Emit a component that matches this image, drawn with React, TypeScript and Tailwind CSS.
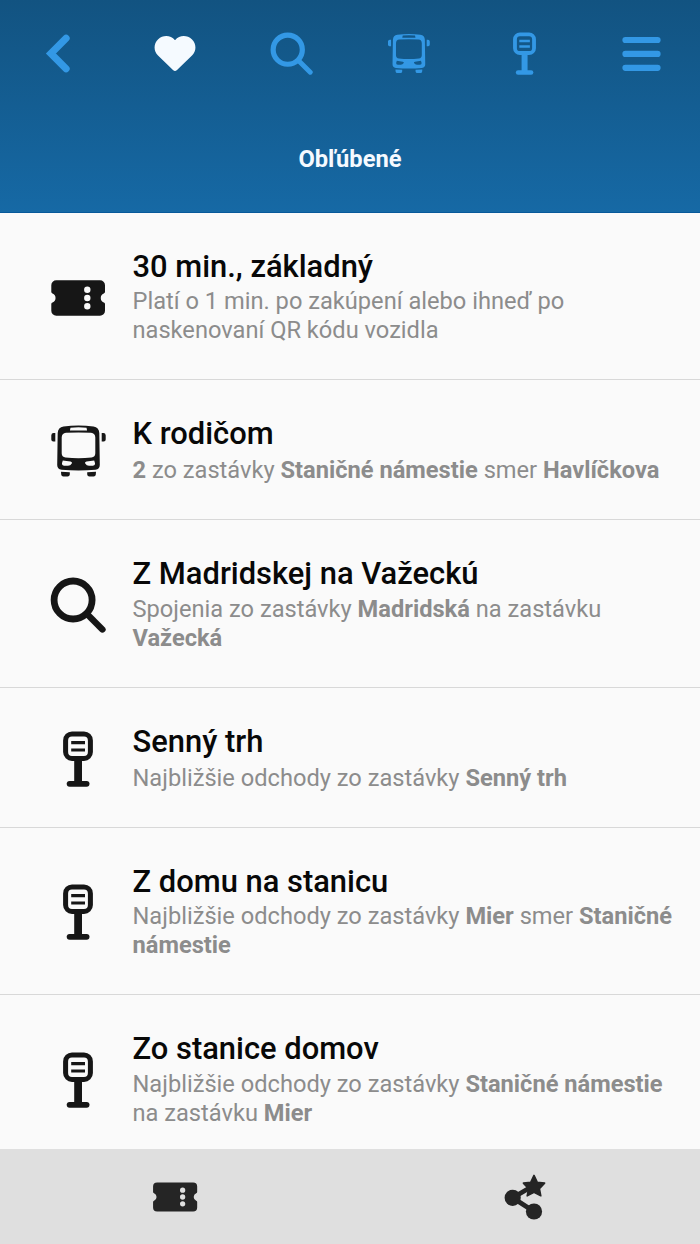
import React from 'react';

interface IconProps {
  className?: string;
}

const TicketIcon: React.FC<IconProps> = ({ className }) => (
  <svg viewBox="0 0 56 56" className={className} fill="currentColor" fillRule="evenodd">
    <path d="M6.3 10.2H50a5 5 0 0 1 5 5v6.8q0 1-1.2 1.4a5 5 0 0 0 0 9.2q1.2 .4 1.2 1.4v6.8a5 5 0 0 1-5 5H6.3a5 5 0 0 1-5-5v-6.8q0-1 1.2-1.4a5 5 0 0 0 0-9.2q-1.2-.4-1.2-1.4v-6.8a5 5 0 0 1 5-5ZM37.3 16.5a3.2 3.2 0 1 0 0 6.4a3.2 3.2 0 1 0 0-6.4ZM37.3 24.8a3.2 3.2 0 1 0 0 6.4a3.2 3.2 0 1 0 0-6.4ZM37.3 33.1a3.2 3.2 0 1 0 0 6.4a3.2 3.2 0 1 0 0-6.4Z" />
  </svg>
);

const BusIcon: React.FC<IconProps> = ({ className }) => (
  <svg viewBox="0 0 56 56" className={className} fill="currentColor" fillRule="evenodd">
    <path d="M13.5 3.6Q28.5 1.4 43.5 3.6Q49 4.6 49.3 10L49.8 42Q49.8 46.2 45.5 46.8Q28.5 48.4 11.5 46.8Q7.2 46.2 7.2 42L7.7 10Q8 4.6 13.5 3.6ZM20.5 4.7L19.9 7.6H37.1L36.5 4.7Q28.5 4 20.5 4.7ZM16 9.8Q11.8 10.2 11.7 14.5V30.3Q11.8 34 15.5 34.5Q28.5 36 41.5 34.5Q45.2 34 45.3 30.3V14.5Q45.2 10.2 41 9.8Q28.5 9 16 9.8ZM12.8 37.6L20.5 38.6Q22.6 39 21.8 40.5Q20.4 42.7 18 42.7H14Q11.8 42.6 11.9 40.5ZM44.2 37.6L36.5 38.6Q34.4 39 35.2 40.5Q36.6 42.7 39 42.7H43Q45.2 42.6 45.1 40.5Z" />
    <path d="M11 48.7L19.8 49.3V51.5Q19.6 53.5 17.6 53.5H13.4Q11.4 53.5 11.2 51.5ZM46 48.7L37.2 49.3V51.5Q37.4 53.5 39.4 53.5H43.6Q45.6 53.5 45.8 51.5Z" />
    <path d="M5.3 10.1V18.6H3.3Q1.3 18.4 1.3 16.4V12.3Q1.5 10.2 3.5 10.1ZM51.7 10.1V18.6H53.7Q55.7 18.4 55.7 16.4V12.3Q55.5 10.2 53.5 10.1Z" />
  </svg>
);

const SearchIcon: React.FC<IconProps> = ({ className }) => (
  <svg viewBox="0 0 56 56" className={className} fill="none" stroke="currentColor" strokeLinecap="round">
    <circle cx="23.1" cy="23" r="19" strokeWidth="6.8" />
    <path d="M38 38L52.4 52.4" strokeWidth="6.4" />
  </svg>
);

const StopIcon: React.FC<IconProps> = ({ className }) => (
  <svg viewBox="0 0 56 56" className={className} fill="none" stroke="currentColor">
    <rect x="15.6" y="3" width="24.8" height="24.4" rx="6.4" strokeWidth="5" />
    <path d="M21.2 11.6H35M21.2 19H35" strokeWidth="3.2" />
    <path d="M28.1 28V52" strokeWidth="7.8" />
    <path d="M19.6 52.8H36.6" strokeWidth="5.8" strokeLinecap="round" />
  </svg>
);

const BackIcon: React.FC<IconProps> = ({ className }) => (
  <svg viewBox="0 0 42 42" className={className} fill="none" stroke="currentColor" strokeWidth="7">
    <path d="M28.4 6.1L13.6 21L28.4 35.9" strokeLinecap="round" />
  </svg>
);

const HeartIcon: React.FC<IconProps> = ({ className }) => (
  <svg viewBox="0 0 42 42" className={className} fill="currentColor">
    <path d="M21 7.2C25.6 1.7 33.2 2 37.8 6.2C42.6 10.7 42.6 18 38 22.6L23 37.1Q21 38.9 19 37.1L4 22.6C-.6 18-.6 10.7 4.2 6.2C8.8 2 16.4 1.7 21 7.2Z" />
  </svg>
);

const MenuIcon: React.FC<IconProps> = ({ className }) => (
  <svg viewBox="0 0 42 42" className={className} fill="none" stroke="currentColor" strokeWidth="6" strokeLinecap="round">
    <path d="M5.3 7.8H36.7M5.3 21.4H36.7M5.3 35H36.7" />
  </svg>
);

const ShareIcon: React.FC<IconProps> = ({ className }) => (
  <svg viewBox="0 0 46 46" className={className} fill="currentColor">
    <path d="M32 37.5L10.7 23.8L30 12.5" fill="none" stroke="currentColor" strokeWidth="4.8" />
    <circle cx="10.7" cy="23.8" r="8.1" />
    <circle cx="32" cy="37.5" r="8.1" />
    <path
      d="M32 1.4L35.3 8.4L42.6 9.1L37.4 14.6L38.8 21.8L32 18.4L25.2 21.8L26.6 14.6L21.4 9.1L28.7 8.4Z"
      stroke="currentColor"
      strokeWidth="1.6"
      strokeLinejoin="round"
    />
  </svg>
);

interface Favourite {
  icon: React.FC<IconProps>;
  title: string;
  description: React.ReactNode;
  rowClass: string;
  textClass: string;
}

const tall = 'h-[167.5px]';
const short = 'h-[140px]';

const favourites: Favourite[] = [
  {
    icon: TicketIcon,
    title: '30 min., základný',
    description: 'Platí o 1 min. po zakúpení alebo ihneď po naskenovaní QR kódu vozidla',
    rowClass: 'h-[167px]',
    textClass: 'mt-[1px]',
  },
  {
    icon: BusIcon,
    title: 'K rodičom',
    description: <><b>2</b> zo zastávky <b>Staničné námestie</b> smer <b>Havlíčkova</b></>,
    rowClass: short,
    textClass: 'mt-[3px]',
  },
  {
    icon: SearchIcon,
    title: 'Z Madridskej na Važeckú',
    description: <>Spojenia zo zastávky <b>Madridská</b> na zastávku <b>Važecká</b></>,
    rowClass: tall,
    textClass: 'mt-[1.5px]',
  },
  {
    icon: StopIcon,
    title: 'Senný trh',
    description: <>Najbližšie odchody zo zastávky <b>Senný trh</b></>,
    rowClass: short,
    textClass: 'mt-[3px]',
  },
  {
    icon: StopIcon,
    title: 'Z domu na stanicu',
    description: <>Najbližšie odchody zo zastávky <b>Mier</b> smer <b>Staničné námestie</b></>,
    rowClass: tall,
    textClass: 'mt-[1px]',
  },
  {
    icon: StopIcon,
    title: 'Zo stanice domov',
    description: <>Najbližšie odchody zo zastávky <b>Staničné námestie</b> na zastávku <b>Mier</b></>,
    rowClass: tall,
    textClass: 'mt-[1.5px]',
  },
];

const tabs = [
  { label: 'Späť', icon: BackIcon, active: false },
  { label: 'Obľúbené', icon: HeartIcon, active: true },
  { label: 'Hľadať', icon: SearchIcon, active: false },
  { label: 'Spoje', icon: BusIcon, active: false },
  { label: 'Zastávky', icon: StopIcon, active: false },
  { label: 'Menu', icon: MenuIcon, active: false },
];

const App: React.FC = () => {
  return (
    <div className="flex h-[1244px] w-[700px] flex-col overflow-hidden bg-[#fafafa] font-['Roboto',sans-serif]">
      <header className="h-[213px] shrink-0 border-b border-[#07599a] bg-linear-to-b from-[#125381] to-[#1669a5]">
        <nav className="grid h-[107px] grid-cols-6">
          {tabs.map(({ label, icon: Icon, active }) => (
            <button key={label} aria-label={label} className="flex items-center justify-center">
              <Icon className={active ? 'size-[42px] text-[#f5faff]' : 'size-[43px] text-[#3398e5]'} />
            </button>
          ))}
        </nav>
        <h1 className="pt-[36px] text-center text-[23.7px] leading-[32px] font-bold text-[#f5faff]">Obľúbené</h1>
      </header>

      <main className="flex-1 overflow-hidden">
        {favourites.map(({ icon: Icon, title, description, rowClass, textClass }) => (
          <div key={title} className={`flex border-b border-[#d8d8d8] ${rowClass}`}>
            <div className="flex w-[132.5px] shrink-0 items-center pt-[3px] pl-[50px]">
              <Icon className="size-[56px] text-[#161616]" />
            </div>
            <div className="flex-1 pt-[35px] pr-[20px]">
              <h2 className="text-[30.9px] leading-[38px] font-[540] text-[#080808]">{title}</h2>
              <p className={`text-[23.65px] leading-[29px] text-[#8c8c8c] ${textClass}`}>{description}</p>
            </div>
          </div>
        ))}
      </main>

      <footer className="grid h-[95px] shrink-0 grid-cols-2 bg-[#dfdfdf] text-[#252525]">
        <button aria-label="Lístky" className="flex items-center justify-center">
          <TicketIcon className="size-[46px]" />
        </button>
        <button aria-label="Zdieľať" className="flex items-center justify-center">
          <ShareIcon className="size-[46px]" />
        </button>
      </footer>
    </div>
  );
};

export default App;
